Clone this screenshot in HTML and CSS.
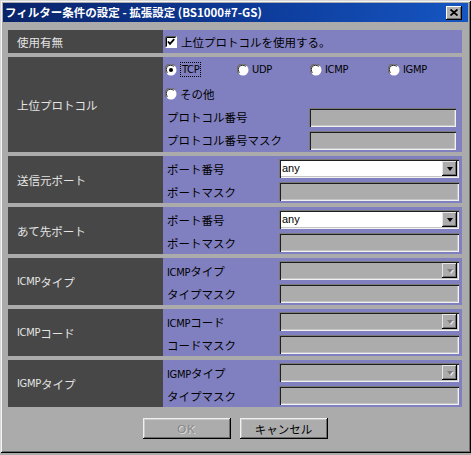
FILE: index.html
```html
<!DOCTYPE html>
<html lang="ja">
<head>
<meta charset="utf-8">
<title>フィルター条件の設定</title>
<link rel="stylesheet" href="styles.css">
</head>
<body>
<div class="window">
  <div class="titlebar">
    <span class="title">フィルター条件の設定 - 拡張設定 (BS1000#7-GS)</span>
    <span class="close"><svg width="8" height="7" viewBox="0 0 8 7"><path d="M0.5 0.5 L7.5 6.5 M7.5 0.5 L0.5 6.5" stroke="#000" stroke-width="1.8"/></svg></span>
  </div>
  <div class="body">
    <div class="rows">
      <div class="row h-use">
        <div class="label">使用有無</div>
        <div class="value v-use">
          <span class="check"><svg width="12" height="12" viewBox="0 0 12 12"><rect x="0.5" y="0.5" width="11" height="11" fill="#fff" stroke="#fff"/><path d="M0.5 11.5 V0.5 H11.5" fill="none" stroke="#5a5a5a"/><path d="M1.5 10.5 V1.5 H10.5" fill="none" stroke="#000"/><path d="M3 5.5 L5 7.8 L9.2 3.2" fill="none" stroke="#000" stroke-width="1.8"/></svg></span>
          <span>上位プロトコルを使用する。</span>
        </div>
      </div>

      <div class="row h-proto">
        <div class="label">上位プロトコル</div>
        <div class="value v-proto">
          <div class="pline radios">
            <span class="ritem w1"><svg class="radio" width="12" height="12" viewBox="0 0 12 12"><circle cx="6" cy="6" r="5.5" fill="#fff"/><path d="M1.6 9.5 A5 5 0 0 1 9.5 1.6" fill="none" stroke="#6a6a6a" stroke-width="1.2"/><path d="M2.5 8.6 A3.8 3.8 0 0 1 8.6 2.5" fill="none" stroke="#222" stroke-width="1"/><circle cx="6" cy="6" r="2" fill="#000"/></svg><span class="focus icmp">TCP</span></span>
            <span class="ritem w2"><svg class="radio" width="12" height="12" viewBox="0 0 12 12"><circle cx="6" cy="6" r="5.5" fill="#fff"/><path d="M1.6 9.5 A5 5 0 0 1 9.5 1.6" fill="none" stroke="#6a6a6a" stroke-width="1.2"/><path d="M2.5 8.6 A3.8 3.8 0 0 1 8.6 2.5" fill="none" stroke="#222" stroke-width="1"/></svg><span class="icmp">UDP</span></span>
            <span class="ritem w3"><svg class="radio" width="12" height="12" viewBox="0 0 12 12"><circle cx="6" cy="6" r="5.5" fill="#fff"/><path d="M1.6 9.5 A5 5 0 0 1 9.5 1.6" fill="none" stroke="#6a6a6a" stroke-width="1.2"/><path d="M2.5 8.6 A3.8 3.8 0 0 1 8.6 2.5" fill="none" stroke="#222" stroke-width="1"/></svg><span class="icmp">ICMP</span></span>
            <span class="ritem"><svg class="radio" width="12" height="12" viewBox="0 0 12 12"><circle cx="6" cy="6" r="5.5" fill="#fff"/><path d="M1.6 9.5 A5 5 0 0 1 9.5 1.6" fill="none" stroke="#6a6a6a" stroke-width="1.2"/><path d="M2.5 8.6 A3.8 3.8 0 0 1 8.6 2.5" fill="none" stroke="#222" stroke-width="1"/></svg><span class="icmp">IGMP</span></span>
          </div>
          <div class="pline radios">
            <span class="ritem"><svg class="radio" width="12" height="12" viewBox="0 0 12 12"><circle cx="6" cy="6" r="5.5" fill="#fff"/><path d="M1.6 9.5 A5 5 0 0 1 9.5 1.6" fill="none" stroke="#6a6a6a" stroke-width="1.2"/><path d="M2.5 8.6 A3.8 3.8 0 0 1 8.6 2.5" fill="none" stroke="#222" stroke-width="1"/></svg><span>その他</span></span>
          </div>
          <div class="line short">
            <span>プロトコル番号</span>
            <span class="input pfield"></span>
          </div>
          <div class="line short">
            <span>プロトコル番号マスク</span>
            <span class="input pfield"></span>
          </div>
        </div>
      </div>

      <div class="row h-std">
        <div class="label">送信元ポート</div>
        <div class="value">
          <div class="line"><span>ポート番号</span><span class="select field"><span class="seltext">any</span><span class="dd"><span class="tri"></span></span></span></div>
          <div class="line"><span>ポートマスク</span><span class="input field"></span></div>
        </div>
      </div>

      <div class="row h-std">
        <div class="label">あて先ポート</div>
        <div class="value">
          <div class="line"><span>ポート番号</span><span class="select field"><span class="seltext">any</span><span class="dd"><span class="tri"></span></span></span></div>
          <div class="line"><span>ポートマスク</span><span class="input field"></span></div>
        </div>
      </div>

      <div class="row h-std">
        <div class="label"><span class="icmp">ICMP</span>タイプ</div>
        <div class="value">
          <div class="line"><span><span class="icmp">ICMP</span>タイプ</span><span class="select field disabled"><span class="seltext"></span><span class="dd"><span class="tri"></span></span></span></div>
          <div class="line"><span>タイプマスク</span><span class="input field"></span></div>
        </div>
      </div>

      <div class="row h-std">
        <div class="label"><span class="icmp">ICMP</span>コード</div>
        <div class="value">
          <div class="line"><span><span class="icmp">ICMP</span>コード</span><span class="select field disabled"><span class="seltext"></span><span class="dd"><span class="tri"></span></span></span></div>
          <div class="line"><span>コードマスク</span><span class="input field"></span></div>
        </div>
      </div>

      <div class="row h-std">
        <div class="label"><span class="icmp">IGMP</span>タイプ</div>
        <div class="value">
          <div class="line"><span><span class="icmp">IGMP</span>タイプ</span><span class="select field disabled"><span class="seltext"></span><span class="dd"><span class="tri"></span></span></span></div>
          <div class="line"><span>タイプマスク</span><span class="input field"></span></div>
        </div>
      </div>
    </div>

    <div class="buttons">
      <button class="btn off">OK</button>
      <button class="btn">キャンセル</button>
    </div>
  </div>
</div>
</body>
</html>
```

FILE: styles.css
```css
html, body {
  margin: 0;
  padding: 0;
  background: #ababab;
}

body {
  font-family: "Noto Sans CJK JP", "Noto Sans", sans-serif;
  font-size: 11.5px;
  color: #000;
}

.window {
  width: 471px;
  height: 453px;
  box-sizing: border-box;
  padding: 3px;
  background: #ababab;
  box-shadow: inset 1px 1px #d8d8d8, inset -1px -1px #000, inset 2px 2px #f4f4f4, inset -2px -2px #6e6e6e;
}

.titlebar {
  height: 19px;
  display: flex;
  align-items: center;
  background: linear-gradient(90deg, #0a246a 0%, #0d3b9a 55%, #1656c2 100%);
}

.title {
  flex: 1;
  color: #fff;
  font-weight: bold;
  font-size: 11.5px;
  padding-left: 2px;
  line-height: 19px;
  white-space: nowrap;
}

.close {
  width: 16px;
  height: 14px;
  margin-right: 6px;
  background: #b0b0b0;
  display: flex;
  align-items: center;
  justify-content: center;
  box-shadow: inset -1px -1px #000, inset 1px 1px #fff, inset -2px -2px #707070;
}

.body {
  padding: 8px 6px 0 5px;
}

.rows {
  display: flex;
  flex-direction: column;
  gap: 4px;
}

.row {
  display: flex;
}

.h-use { height: 23px; }
.h-proto { height: 95px; }
.h-std { height: 47px; }

.label {
  width: 155px;
  flex: none;
  background: #474747;
  color: #e4e4e4;
  padding-left: 9px;
  box-sizing: border-box;
  display: flex;
  align-items: center;
  font-size: 11.5px;
}

.value {
  flex: 1;
  background: #8080c0;
  display: flex;
  flex-direction: column;
  padding-top: 1px;
  box-sizing: border-box;
}

.v-use {
  flex-direction: row;
  align-items: center;
  padding: 0 0 0 2px;
  gap: 4px;
}

.check {
  display: flex;
}

.v-proto {
  padding-top: 1px;
}

.pline {
  height: 24px;
  display: flex;
  align-items: center;
  padding-left: 2px;
}

.ritem {
  display: flex;
  align-items: center;
  gap: 3px;
}

.w1 { width: 72px; }
.w2 { width: 73px; }
.w3 { width: 78px; }

.radio {
  flex: none;
}

.focus {
  outline: 1px dotted #000;
  outline-offset: 0px;
  padding: 0 1px;
  margin-left: 1px;
}

.icmp {
  font-family: "DejaVu Sans Condensed", "Liberation Sans Narrow", sans-serif;
  font-size: 11px;
  letter-spacing: -0.3px;
}

.line {
  height: 23px;
  display: flex;
  align-items: center;
  padding-left: 4px;
}

.line.short {
  height: 23.5px;
}

.field {
  margin-left: auto;
  width: 180px;
  margin-right: 3px;
  height: 19px;
  box-sizing: border-box;
}

.pfield {
  margin-left: auto;
  width: 147px;
  margin-right: 6px;
  height: 19px;
  box-sizing: border-box;
}

.input {
  display: block;
  background: #acacac;
  box-shadow: inset 1px 1px #7a7a7a, inset 2px 2px #1e1e1e, inset -1px -1px #f2f2f2, inset -2px -2px #c4c4c4;
}

.select {
  display: flex;
  align-items: center;
  background: #fff;
  padding: 2px;
  box-shadow: inset 1px 1px #7a7a7a, inset 2px 2px #1e1e1e, inset -1px -1px #f2f2f2, inset -2px -2px #c4c4c4;
}

.select.disabled {
  background: #acacac;
}

.seltext {
  flex: 1;
  font-family: "Liberation Sans", "Noto Sans", sans-serif;
  font-size: 11px;
  line-height: 15px;
  padding-left: 1px;
}

.dd {
  width: 15px;
  height: 15px;
  background: #acacac;
  display: flex;
  align-items: center;
  justify-content: center;
  box-shadow: inset -1px -1px #000, inset 1px 1px #e6e6e6, inset -2px -2px #707070;
}

.tri {
  width: 0;
  height: 0;
  border-left: 3.5px solid transparent;
  border-right: 3.5px solid transparent;
  border-top: 4px solid #000;
  margin-top: 1px;
}

.disabled .tri {
  border-top-color: #7c7c7c;
  filter: drop-shadow(1px 1px 0 #eaeaea);
}

.buttons {
  display: flex;
  justify-content: center;
  gap: 9px;
  margin-top: 11px;
}

.btn {
  width: 88px;
  height: 21px;
  border: none;
  background: #acacac;
  font-family: "Noto Sans CJK JP", "Noto Sans", sans-serif;
  font-size: 11.5px;
  color: #000;
  padding: 0;
  box-shadow: inset -1px -1px #000, inset 1px 1px #f0f0f0, inset -2px -2px #6e6e6e, inset 2px 2px #c8c8c8;
}

.btn.off {
  color: #868686;
  text-shadow: 1px 1px 0 #dedede;
  font-family: "Liberation Sans", sans-serif;
  letter-spacing: 1px;
}
```
